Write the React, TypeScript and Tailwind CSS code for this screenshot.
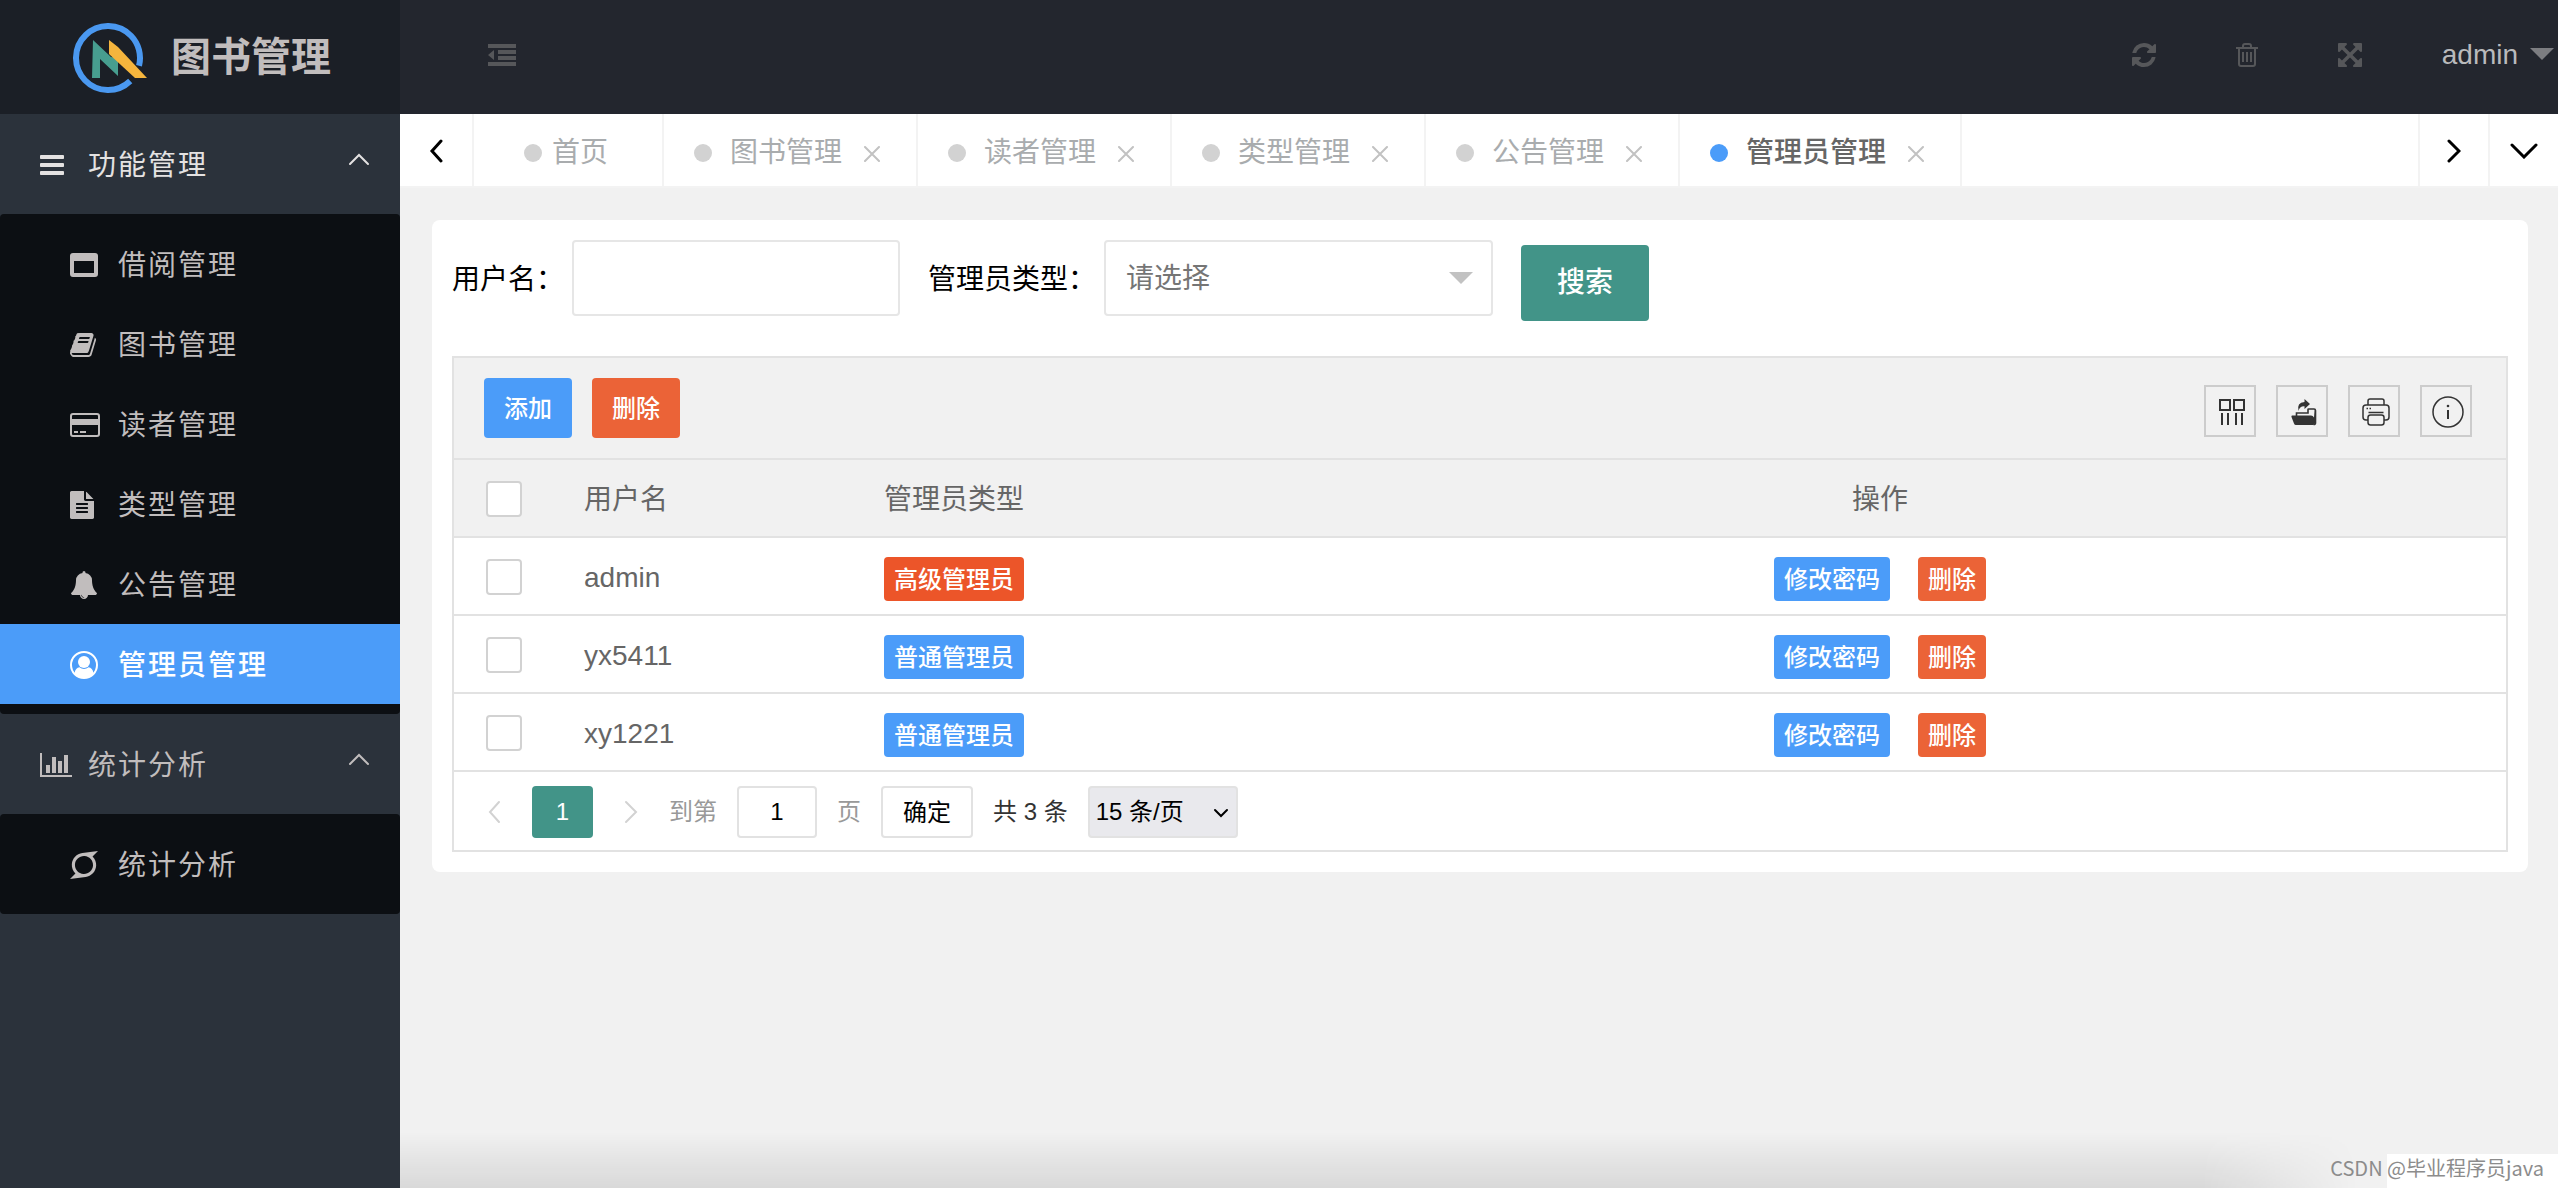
import { type FC, type ReactNode } from "react";
import { FaSuperpowers } from "react-icons/fa";

/* ---------- icons ---------- */

const Glyph: FC<{ d: string; box?: string; className: string }> = ({
  d,
  box = "0 0 1792 1792",
  className,
}) => (
  <svg viewBox={box} fill="currentColor" className={className} aria-hidden>
    <path d={d} />
  </svg>
);

const BARS =
  "M1664 1344v128q0 26-19 45t-45 19h-1408q-26 0-45-19t-19-45v-128q0-26 19-45t45-19h1408q26 0 45 19t19 45zm0-512v128q0 26-19 45t-45 19h-1408q-26 0-45-19t-19-45v-128q0-26 19-45t45-19h1408q26 0 45 19t19 45zm0-512v128q0 26-19 45t-45 19h-1408q-26 0-45-19t-19-45v-128q0-26 19-45t45-19h1408q26 0 45 19t19 45z";
const CHART =
  "M640 896v512h-256v-512h256zm384-512v1024h-256v-1024h256zm1024 1152v128h-2048v-1536h128v1408h1920zm-640-896v768h-256v-768h256zm384-384v1152h-256v-1152h256z";
const BOOK =
  "M1703 478q40 57 18 129l-275 906q-19 64-76.500 107.500t-122.500 43.500h-923q-77 0-148.500-53.500t-99.500-131.500q-24-67-2-127 0-4 3-27t4-37q1-8-3-21.500t-3-19.500q2-11 8-21t16.500-23.500 16.500-23.500q23-38 45-91.500t30-91.500q3-10 .5-30t-.5-28q3-11 17-28t17-23q21-36 42-92t25-90q1-9-2.500-32t.5-28q4-13 22-30.500t22-22.500q19-26 42.500-84.500t27.500-96.500q1-8-3-25.500t-2-26.500q2-8 9-18t18-23 17-21q8-12 16.500-30.500t15-35 16-36 19.500-32 26.500-23.500 36-11.500 47.500 5.500l-1 3q38-9 51-9h761q74 0 114 56t18 130l-274 906q-36 119-71.500 153.500t-128.500 34.500h-869q-27 0-38 15-11 16-1 43 24 70 144 70h923q29 0 56-15.500t35-41.500l300-987q7-22 5-57 38 15 59 43zm-1064 2q-4 13 2 22.500t20 9.500h608q13 0 25.500-9.500t16.500-22.500l21-64q4-13-2-22.500t-20-9.500h-608q-13 0-25.500 9.500t-16.500 22.500zm-83 256q-4 13 2 22.500t20 9.500h608q13 0 25.500-9.500t16.500-22.500l21-64q4-13-2-22.500t-20-9.500h-608q-13 0-25.500 9.500t-16.500 22.500z";
const FILE =
  "M1596 476q14 14 28 36h-472v-472q22 14 36 28zm-476 164h544v1056q0 40-28 68t-68 28h-1344q-40 0-68-28t-28-68v-1600q0-40 28-68t68-28h800v544q0 40 28 68t68 28zm160 736v-64q0-14-9-23t-23-9h-704q-14 0-23 9t-9 23v64q0 14 9 23t23 9h704q14 0 23-9t9-23zm0-256v-64q0-14-9-23t-23-9h-704q-14 0-23 9t-9 23v64q0 14 9 23t23 9h704q14 0 23-9t9-23zm0-256v-64q0-14-9-23t-23-9h-704q-14 0-23 9t-9 23v64q0 14 9 23t23 9h704q14 0 23-9t9-23z";
const BELL =
  "M912 1696q0-16-16-16-59 0-101.500-42.500t-42.500-101.500q0-16-16-16t-16 16q0 73 51.500 124.500t124.500 51.500q16 0 16-16zm816-288q0 52-38 90t-90 38h-448q0 106-75 181t-181 75-181-75-75-181h-448q-52 0-90-38t-38-90q50-42 91-88t85-119.500 74.500-158.500 50-206 19.500-260q0-152 117-282.500t307-158.500q-8-19-8-39 0-40 28-68t68-28 68 28 28 68q0 20-8 39 190 28 307 158.500t117 282.500q0 139 19.500 260t50 206 74.500 158.500 85 119.500 91 88z";
const REFRESH =
  "M1639 1056q0 5-1 7-64 268-268 434.500t-478 166.500q-146 0-282.500-55t-243.500-157l-129 129q-19 19-45 19t-45-19-19-45v-448q0-26 19-45t45-19h448q26 0 45 19t19 45-19 45l-137 137q71 66 161 102t187 36q134 0 250-65t186-179q11-17 53-117 8-23 30-23h192q13 0 22.500 9.500t9.500 22.500zm25-800v448q0 26-19 45t-45 19h-448q-26 0-45-19t-19-45 19-45l138-138q-148-137-349-137-134 0-250 65t-186 179q-11 17-53 117-8 23-30 23h-199q-13 0-22.500-9.500t-9.500-22.500v-7q65-268 270-434.500t480-166.500q146 0 284 55.500t245 156.500l130-129q19-19 45-19t45 19 19 45z";
const EXPAND =
  "M1411 541l-355 355 355 355 144-144q29-31 70-14 39 17 39 59v448q0 26-19 45t-45 19h-448q-42 0-59-40-17-39 14-69l144-144-355-355-355 355 144 144q31 30 14 69-17 40-59 40h-448q-26 0-45-19t-19-45v-448q0-42 40-59 39-17 69 14l144 144 355-355-355-355-144 144q-19 19-45 19-12 0-24-5-40-17-40-59v-448q0-26 19-45t45-19h448q42 0 59 40 17 39-14 69l-144 144 355 355 355-355-144-144q-31-30-14-69 17-40 59-40h448q26 0 45 19t19 45v448q0 42-39 59-13 5-25 5-26 0-45-19z";

const WindowIcon: FC = () => (
  <svg viewBox="0 0 28 24" className="h-6 w-7" fill="currentColor" aria-hidden>
    <path
      fillRule="evenodd"
      d="M3 0h22a3 3 0 0 1 3 3v18a3 3 0 0 1-3 3H3a3 3 0 0 1-3-3V3a3 3 0 0 1 3-3zM4 8v12h20V8z"
    />
  </svg>
);

const CardIcon: FC = () => (
  <svg viewBox="0 0 30 24" className="h-6 w-[30px]" fill="currentColor" aria-hidden>
    <rect x="1" y="1" width="28" height="22" rx="2" fill="none" stroke="currentColor" strokeWidth="2" />
    <path d="M1 6h28v6H1zM4 18h4v2H4zM10 18h6v2h-6z" />
  </svg>
);

const UserIcon: FC = () => (
  <svg viewBox="0 0 28 28" className="size-7" fill="currentColor" aria-hidden>
    <circle cx="14" cy="14" r="13" fill="none" stroke="currentColor" strokeWidth="2" />
    <circle cx="14" cy="11" r="6" />
    <path d="M4.500 22.500C5 18.500 7 16.500 9.500 16.300a7 7 0 0 0 9 0c2.500.2 4.500 2.200 5 6.200A13 13 0 0 1 14 27a13 13 0 0 1-9.500-4.500z" />
  </svg>
);

const Chevron: FC<{ d: string; box: string; className: string; width?: number }> = ({
  d,
  box,
  className,
  width = 3,
}) => (
  <svg
    viewBox={box}
    fill="none"
    stroke="currentColor"
    strokeWidth={width}
    strokeLinecap="round"
    className={className}
    aria-hidden
  >
    <path d={d} />
  </svg>
);

const LEFT = "M12 2 3 12l9 10";
const RIGHT = "M2 2l10 10L2 22";

const Triangle: FC<{ className: string }> = ({ className }) => (
  <svg viewBox="0 0 24 12" fill="currentColor" className={className} aria-hidden>
    <path d="M0 0h24L12 12z" />
  </svg>
);

const Logo: FC = () => (
  <svg viewBox="0 0 74 72" className="mt-1 h-[72px] w-[74px]" aria-hidden>
    <circle
      cx="35"
      cy="35"
      r="32"
      fill="none"
      stroke="#4a98f0"
      strokeWidth="6"
      strokeDasharray="183 19"
      transform="rotate(46 35 35)"
    />
    <path d="M20 17l18 17 7 1v18L27 36v19h-8z" fill="#479e8f" />
    <path d="M36 17l9 7 29 31H62L36 31z" fill="#f5b53d" />
  </svg>
);

/* ---------- data ---------- */

const manageMenu: { label: string; icon: ReactNode; active?: boolean }[] = [
  { label: "借阅管理", icon: <WindowIcon /> },
  { label: "图书管理", icon: <Glyph d={BOOK} box="64 0 1664 1792" className="h-7 w-[26px]" /> },
  { label: "读者管理", icon: <CardIcon /> },
  { label: "类型管理", icon: <Glyph d={FILE} box="128 0 1536 1792" className="h-7 w-6" /> },
  { label: "公告管理", icon: <Glyph d={BELL} className="size-7" /> },
  { label: "管理员管理", icon: <UserIcon />, active: true },
];

const statsMenu = [
  { label: "统计分析", icon: <FaSuperpowers viewBox="0 32 448 448" className="size-7" /> },
];

const tabs = ["图书管理", "读者管理", "类型管理", "公告管理", "管理员管理"];

const admins = [
  { name: "admin", role: "高级管理员", senior: true },
  { name: "yx5411", role: "普通管理员", senior: false },
  { name: "xy1221", role: "普通管理员", senior: false },
];

/* ---------- sidebar ---------- */

const MenuGroup: FC<{
  title: string;
  icon: ReactNode;
  open?: boolean;
  items: { label: string; icon: ReactNode; active?: boolean }[];
}> = ({ title, icon, open, items }) => (
  <div>
    <button
      className={`flex h-[100px] w-full items-center pt-[2px] pr-[30px] pl-10 text-[28px] tracking-[2px] ${
        open ? "text-[#e4e2e2]" : "text-[#c1bdbd]"
      }`}
    >
      <span className="w-12">{icon}</span>
      <span className="flex-1 pt-[2px] text-left">{title}</span>
      <Chevron d="M2 12 11 3l9 9" box="0 0 22 14" width={2} className="mb-3 h-[14px] w-[22px]" />
    </button>
    <ul className="rounded bg-[#0c0f13] py-[10px]">
      {items.map((item) => (
        <li key={item.label}>
          <a
            href="#"
            className={`flex h-20 items-center pt-[2px] pl-[70px] text-[28px] tracking-[2px] ${
              item.active ? "bg-[#4b9cf9] font-medium text-white" : "text-[#c1bdbd]"
            }`}
          >
            <span className="w-12">{item.icon}</span>
            <span className="pt-[2px]">{item.label}</span>
          </a>
        </li>
      ))}
    </ul>
  </div>
);

const Sidebar: FC = () => (
  <aside className="w-[400px] shrink-0 bg-[#2b323b]">
    <div className="flex h-[114px] items-center gap-6 bg-[#1b1f26] pl-[73px]">
      <Logo />
      <h1 className="text-[40px] font-bold text-[#c1bdbd]">图书管理</h1>
    </div>
    <nav>
      <MenuGroup
        title="功能管理"
        icon={<Glyph d={BARS} box="128 128 1536 1536" className="size-6" />}
        items={manageMenu}
        open
      />
      <MenuGroup
        title="统计分析"
        icon={<Glyph d={CHART} box="0 128 2048 1536" className="h-6 w-8" />}
        items={statsMenu}
      />
    </nav>
  </aside>
);

/* ---------- header ---------- */

const Header: FC = () => (
  <header className="flex h-[114px] items-center justify-between bg-[#23262e] pr-1 pb-1 pl-[88px] text-[#56575a]">
    <button aria-label="收起菜单">
      <svg viewBox="0 0 28 22" className="h-[22px] w-7" fill="currentColor" aria-hidden>
        <path d="M0 0h28v4H0zM10 6h18v4H10zM10 12h18v4H10zM0 18h28v4H0zM6 6v10L0 11z" />
      </svg>
    </button>
    <div className="flex items-center">
      <button aria-label="刷新" className="mr-20">
        <Glyph d={REFRESH} box="128 128 1536 1536" className="size-6" />
      </button>
      <button aria-label="清理" className="mr-20">
        <svg
          viewBox="0 0 22 24"
          className="h-6 w-[22px]"
          fill="none"
          stroke="currentColor"
          strokeWidth="2"
          aria-hidden
        >
          <path d="M0 5h22M7 5V3q0-2 2-2h4q2 0 2 2v2M3 5v16q0 2 2 2h12q2 0 2-2V5M7 9v10M11 9v10M15 9v10" />
        </svg>
      </button>
      <button aria-label="全屏" className="mr-20">
        <Glyph d={EXPAND} box="128 128 1536 1536" className="size-6" />
      </button>
      <button className="flex items-center gap-3 text-[28px] text-[#b9babc]">
        admin
        <Triangle className="mb-[2px] h-3 w-6 text-[#7c7d81]" />
      </button>
    </div>
  </header>
);

const TabBar: FC = () => (
  <div className="flex h-[74px] border-b-2 border-[#f3f3f3] bg-white text-[28px] text-[#a9acae]">
    <button
      aria-label="向左滚动"
      className="flex w-[74px] items-center justify-center border-r-2 border-[#f3f3f3] pt-[2px] text-black"
    >
      <Chevron d={LEFT} box="0 0 14 24" className="h-6 w-[14px]" />
    </button>
    <button className="flex items-center gap-[10px] border-r-2 border-[#f3f3f3] pt-[5px] pr-[54px] pl-[50px]">
      <span className="size-[18px] rounded-full bg-[#d2d2d2]" />
      首页
    </button>
    {tabs.map((tab) => {
      const active = tab === "管理员管理";
      return (
        <div
          key={tab}
          className={`flex items-center border-r-2 border-[#f3f3f3] pt-[5px] pr-9 pl-[30px] ${
            active ? "font-medium text-[#666]" : ""
          }`}
        >
          <button className="flex items-center gap-[18px]">
            <span
              className={`size-[18px] rounded-full ${active ? "bg-[#4b9cf9]" : "bg-[#d2d2d2]"}`}
            />
            {tab}
          </button>
          <button aria-label={`关闭${tab}`} className="ml-[22px] text-[#c2c2c2]">
            <Chevron d="M1 1l14 14M15 1 1 15" box="0 0 16 16" width={2} className="mt-[2px] size-4" />
          </button>
        </div>
      );
    })}
    <button
      aria-label="向右滚动"
      className="ml-auto flex w-[70px] items-center justify-center border-l-2 border-[#f3f3f3] pt-[2px] text-black"
    >
      <Chevron d={RIGHT} box="0 0 14 24" className="h-6 w-[14px]" />
    </button>
    <button
      aria-label="更多"
      className="flex w-[70px] items-center justify-center border-l-2 border-[#f3f3f3] pt-[2px] text-black"
    >
      <Chevron d="M2 2l12 12L26 2" box="0 0 28 16" className="h-4 w-7" />
    </button>
  </div>
);

/* ---------- content ---------- */

const SearchForm: FC = () => (
  <form className="flex items-start text-[28px] text-black" onSubmit={(e) => e.preventDefault()}>
    <label htmlFor="username" className="leading-[80px]">
      用户名：
    </label>
    <input
      id="username"
      type="text"
      className="ml-2 h-[76px] w-[328px] rounded border-2 border-[#e6e6e6] bg-white px-5 outline-none"
    />
    <label htmlFor="admin-type" className="ml-7 leading-[80px]">
      管理员类型：
    </label>
    <div className="relative ml-2">
      <select
        id="admin-type"
        className="h-[76px] w-[389px] appearance-none rounded border-2 border-[#e6e6e6] bg-white pt-[2px] pl-5 text-[#757575] outline-none"
      >
        <option>请选择</option>
        <option>普通管理员</option>
        <option>高级管理员</option>
      </select>
      <Triangle className="pointer-events-none absolute top-8 right-5 h-3 w-6 text-[#c2c2c2]" />
    </div>
    <button className="mt-[5px] ml-7 h-[76px] w-32 rounded bg-[#429488] font-medium text-white">
      搜索
    </button>
  </form>
);

const ToolButton: FC<{ label: string; children: ReactNode }> = ({ label, children }) => (
  <button
    aria-label={label}
    className="flex size-[52px] items-center justify-center border-2 border-[#ccc] pt-[2px] pl-1 text-[#333]"
  >
    {children}
  </button>
);

const Toolbar: FC = () => (
  <div className="flex h-[102px] items-center gap-5 border-b-2 border-[#e2e2e2] bg-[#f1f1f1] pr-[34px] pl-[30px]">
    <button className="h-[60px] w-[88px] rounded bg-[#4b9cf9] pt-[2px] text-2xl font-medium text-white">
      添加
    </button>
    <button className="h-[60px] w-[88px] rounded bg-[#eb6337] pt-[2px] text-2xl font-medium text-white">
      删除
    </button>
    <div className="ml-auto flex gap-5 pt-[6px]">
      <ToolButton label="筛选列">
        <svg viewBox="0 0 26 26" className="size-[26px]" stroke="currentColor" strokeWidth="2" fill="none">
          <path d="M1 1h10v10H1zM15 1h10v10H15zM3 14v12M9 14v12M17 14v12M23 14v12" />
        </svg>
      </ToolButton>
      <ToolButton label="导出">
        <svg viewBox="0 0 26 28" className="h-7 w-[26px]" fill="currentColor">
          <path d="M1 17.500h19q2 0 3 2l1-9.500V25q0 2-2 2H5q-1.500 0-2-1.500L.5 19q-.4-1.500.5-1.500z" />
          <path
            d="M5.500 18v-3h11.500v-3.500q0-.5.500-.5H23q1.500 0 1.500 1.500V25q0 1.500-2 1.500"
            fill="none"
            stroke="currentColor"
            strokeWidth="1.600"
          />
          <path d="M7.500 13Q5.500 4.500 13.500 4V1l5.500 5-5.500 5V8.300Q8.500 8 7.500 13z" />
        </svg>
      </ToolButton>
      <ToolButton label="打印">
        <svg
          viewBox="0 0 28 28"
          className="size-7"
          fill="none"
          stroke="currentColor"
          strokeWidth="1.500"
        >
          <path d="M6 7V3q0-2 2-2h12q2 0 2 2v4M6 22H4q-3 0-3-3v-9q0-3 3-3h20q3 0 3 3v9q0 3-3 3h-2M6.500 14.500h15" />
          <rect x="6" y="17" width="16" height="10" rx="2.500" />
          <path d="M4.500 10.500h1.500M7.500 10.500H9" />
        </svg>
      </ToolButton>
      <ToolButton label="提示">
        <svg viewBox="0 0 32 32" className="size-8" fill="none" stroke="currentColor">
          <circle cx="16" cy="16" r="15" strokeWidth="1.500" />
          <path d="M16 14v9" strokeWidth="2" />
          <circle cx="16" cy="10" r="1.300" fill="currentColor" stroke="none" />
        </svg>
      </ToolButton>
    </div>
  </div>
);

const Check: FC<{ label: string }> = ({ label }) => (
  <input
    type="checkbox"
    aria-label={label}
    className="mt-[2px] block size-9 appearance-none rounded border-2 border-[#d2d2d2] bg-white"
  />
);

const AdminTable: FC = () => (
  <table className="w-full table-fixed border-collapse text-left text-[28px] text-[#666]">
    <thead>
      <tr className="h-[77px] border-b-2 border-[#e2e2e2] bg-[#f1f1f1]">
        <th className="w-[100px] pl-8">
          <Check label="全选" />
        </th>
        <th className="w-[300px] pt-1 pl-[30px] font-normal">用户名</th>
        <th className="w-[400px] pt-1 pl-[30px] font-normal">管理员类型</th>
        <th className="pt-1 text-center font-normal">操作</th>
      </tr>
    </thead>
    <tbody>
      {admins.map((admin) => (
        <tr key={admin.name} className="h-[78px] border-b-2 border-[#e2e2e2]">
          <td className="pl-8">
            <Check label={`选择 ${admin.name}`} />
          </td>
          <td className="pt-1 pl-[30px]">{admin.name}</td>
          <td className="pl-[30px]">
            <span
              className={`mt-[6px] flex h-11 w-fit items-center rounded px-[10px] pt-[2px] text-2xl font-medium text-white ${
                admin.senior ? "bg-[#ec5529]" : "bg-[#4b9cf9]"
              }`}
            >
              {admin.role}
            </span>
          </td>
          <td>
            <div className="mt-[6px] flex justify-center gap-7 text-2xl font-medium text-white">
              <button className="h-11 rounded bg-[#4b9cf9] px-[10px] pt-[2px]">修改密码</button>
              <button className="h-11 rounded bg-[#eb6337] px-[10px] pt-[2px]">删除</button>
            </div>
          </td>
        </tr>
      ))}
    </tbody>
  </table>
);

const Pagination: FC = () => (
  <div className="flex h-[78px] items-center pt-[2px] pl-8 text-2xl text-[#999]">
    <button aria-label="上一页" className="text-[#d2d2d2]">
      <Chevron d={LEFT} box="0 0 14 24" width={2} className="h-6 w-4" />
    </button>
    <button className="ml-[30px] h-[52px] w-[61px] rounded bg-[#429488] text-white">1</button>
    <button aria-label="下一页" className="ml-[30px] text-[#d2d2d2]">
      <Chevron d={RIGHT} box="0 0 14 24" width={2} className="h-6 w-4" />
    </button>
    <label htmlFor="page" className="ml-[30px]">
      到第
    </label>
    <input
      id="page"
      type="text"
      defaultValue="1"
      className="ml-5 h-[52px] w-20 rounded border-2 border-[#e2e2e2] bg-white text-center text-black outline-none"
    />
    <span className="ml-5">页</span>
    <button className="ml-5 h-[52px] w-[92px] rounded border-2 border-[#e2e2e2] bg-white pt-[2px] text-black">
      确定
    </button>
    <span className="ml-5 text-[#333]">共 3 条</span>
    <div className="relative ml-5">
      <select
        aria-label="每页条数"
        className="h-[52px] w-[150px] appearance-none rounded border-2 border-[#e2e2e2] bg-[#e9e9ed] pl-[6px] text-black outline-none"
      >
        <option>15 条/页</option>
        <option>30 条/页</option>
      </select>
      <Chevron
        d="M2 2l6 6 6-6"
        box="0 0 16 10"
        width={2}
        className="pointer-events-none absolute top-[22px] right-[9px] h-[10px] w-4 text-black"
      />
    </div>
  </div>
);

export default function App() {
  return (
    <div className="relative flex min-h-screen bg-[#f1f1f1] [font-family:'Liberation_Sans','Noto_Sans_CJK_SC',sans-serif]">
      <Sidebar />
      <div className="min-w-0 flex-1">
        <Header />
        <TabBar />
        <main className="mt-8 mr-[30px] ml-8 rounded-lg bg-white p-5">
          <SearchForm />
          <section className="mt-[35px] border-2 border-[#e2e2e2]">
            <Toolbar />
            <AdminTable />
            <Pagination />
          </section>
        </main>
      </div>
      <div className="pointer-events-none absolute right-[200px] bottom-0 left-[400px] h-14 bg-linear-to-t from-black/10 to-transparent [mask-image:linear-gradient(to_right,black_92%,transparent)]" />
      <div className="absolute right-0 bottom-0 flex h-[34px] items-center bg-linear-to-r from-transparent from-25% to-white to-25% pr-[14px] pb-[6px] text-[20px] text-[#8c8c8c] [font-family:'Noto_Sans_CJK_SC',sans-serif]">
        CSDN @毕业程序员java
      </div>
    </div>
  );
}
